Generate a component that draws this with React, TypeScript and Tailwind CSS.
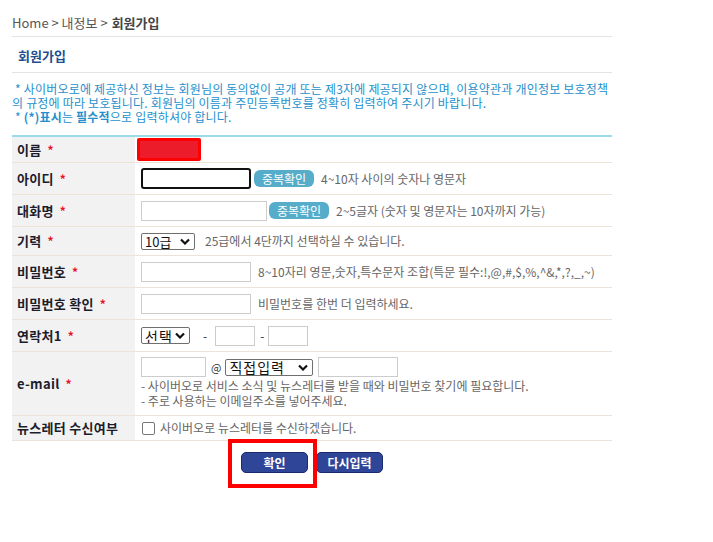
import React from "react";

const font = { fontFamily: '"Noto Sans CJK KR", "Noto Sans", sans-serif' };

function Chevron() {
  return (
    <svg width="10" height="7" viewBox="0 0 10 7" className="shrink-0">
      <path d="M1 1.5 L5 5.5 L9 1.5" fill="none" stroke="#111" strokeWidth="2.2" />
    </svg>
  );
}

function Sel({ label, w, big }: { label: string; w: string; big?: boolean }) {
  return (
    <div
      className={`${w} h-[17px] border border-[#6f6f6f] rounded-[2px] bg-white flex items-center justify-between pl-[3px] pr-[4px] whitespace-nowrap overflow-hidden ${
        big ? "text-[14px] tracking-[1px]" : "text-[13px]"
      } text-[#111] leading-none`}
    >
      <span>{label}</span>
      <Chevron />
    </div>
  );
}

function Label({ text }: { text: string }) {
  return (
    <div className="w-[123px] shrink-0 bg-[#f2f2f2] flex items-center pl-[5px] text-[13px] font-bold text-[#1c1c2c] tracking-[0.3px]">
      {text}
      <span className="text-[#e8102a] ml-[6px] text-[12px]">*</span>
    </div>
  );
}

function Row({ h, label, children, star = true }: { h: string; label: string; children?: React.ReactNode; star?: boolean }) {
  return (
    <div className={`flex ${h} border-b border-[#ebe2d8]`}>
      {star ? (
        <Label text={label} />
      ) : (
        <div className="w-[123px] shrink-0 bg-[#f2f2f2] flex items-center pl-[5px] text-[13px] font-bold text-[#1c1c2c] tracking-[0.3px]">{label}</div>
      )}
      <div className="flex-1 flex items-center pl-[6px] text-[12px] text-[#666] whitespace-nowrap">{children}</div>
    </div>
  );
}

function Input({ w }: { w: string }) {
  return <div className={`${w} h-[20px] border border-[#cccccc] bg-white shrink-0`} />;
}

function DupBtn() {
  return (
    <div className="w-[60px] h-[17px] rounded-[6px] bg-[#56adca] text-white text-[12px] flex items-center justify-center leading-none shrink-0">
      중복확인
    </div>
  );
}

export default function App() {
  return (
    <div className="w-[713px] h-[542px] bg-white" style={font}>
      <div className="ml-[12px] w-[600px]">
        <div className="h-[37px] border-b border-[#e3e3e3] flex items-center pt-[9px] text-[13px] text-[#555]">
          <span>Home &gt; 내정보 &gt; </span>
          <span className="font-bold text-[#444] ml-[4px]">회원가입</span>
        </div>
        <div className="h-[36px] border-b border-[#e3e3e3] flex items-center pl-[6px] pt-[3px] text-[13px] font-bold text-[#1f4f8f]">
          회원가입
        </div>
        <div className="pt-[9px] text-[12px] leading-[14px] text-[#2590cc] tracking-[0.2px]">
          <div className="pl-[3px] whitespace-nowrap">* 사이버오로에 제공하신 정보는 회원님의 동의없이 공개 또는 제3자에 제공되지 않으며, 이용약관과 개인정보 보호정책</div>
          <div className="whitespace-nowrap">의 규정에 따라 보호됩니다. 회원님의 이름과 주민등록번호를 정확히 입력하여 주시기 바랍니다.</div>
          <div className="pl-[3px]">
            * <span className="font-bold">(*)표시</span>는 <span className="font-bold">필수적</span>으로 입력하셔야 합니다.
          </div>
        </div>
        <div className="mt-[11px] border-t-2 border-[#9adce9]">
          <Row h="h-[26px]" label="이름">
            <div className="-ml-[4px] w-[64px] h-[23px] bg-[#ff0000] rounded-[2px] p-[3px]">
              <div className="w-full h-full bg-[#ec1c2a]" />
            </div>
          </Row>
          <Row h="h-[32px]" label="아이디">
            <div className="w-[110px] h-[21px] border-2 border-[#111] rounded-[3px] bg-white shrink-0" />
            <div className="ml-[3px]">
              <DupBtn />
            </div>
            <span className="ml-[7px]">4~10자 사이의 숫자나 영문자</span>
          </Row>
          <Row h="h-[32px]" label="대화명">
            <Input w="w-[126px]" />
            <div className="ml-[2px]">
              <DupBtn />
            </div>
            <span className="ml-[7px]">2~5글자 (숫자 및 영문자는 10자까지 가능)</span>
          </Row>
          <Row h="h-[29px]" label="기력">
            <Sel label="10급" w="w-[54px]" />
            <span className="ml-[10px]">25급에서 4단까지 선택하실 수 있습니다.</span>
          </Row>
          <Row h="h-[32px]" label="비밀번호">
            <Input w="w-[110px]" />
            <span className="ml-[7px]">8~10자리 영문,숫자,특수문자 조합(특문 필수:!,@,#,$,%,^&amp;,*,?,_,~)</span>
          </Row>
          <Row h="h-[32px]" label="비밀번호 확인">
            <Input w="w-[110px]" />
            <span className="ml-[7px]">비밀번호를 한번 더 입력하세요.</span>
          </Row>
          <Row h="h-[32px]" label="연락처1">
            <Sel label="선택" w="w-[49px]" big />
            <span className="ml-[13px] text-[#333]">-</span>
            <div className="ml-[8px]">
              <Input w="w-[40px]" />
            </div>
            <span className="ml-[5px] text-[#333]">-</span>
            <div className="ml-[4px]">
              <Input w="w-[40px]" />
            </div>
          </Row>
          <div className="flex h-[64px] border-b border-[#ebe2d8]">
            <Label text="e-mail" />
            <div className="flex-1 pl-[6px] pt-[5px] text-[12px] text-[#666] whitespace-nowrap">
              <div className="flex items-center">
                <Input w="w-[65px]" />
                <span className="ml-[5px] mr-[4px] text-[#333] text-[11px]">@</span>
                <Sel label="직접입력" w="w-[88px]" big />
                <div className="ml-[5px]">
                  <Input w="w-[80px]" />
                </div>
              </div>
              <div className="leading-[15px] mt-[1px]">- 사이버오로 서비스 소식 및 뉴스레터를 받을 때와 비밀번호 찾기에 필요합니다.</div>
              <div className="leading-[15px]">- 주로 사용하는 이메일주소를 넣어주세요.</div>
            </div>
          </div>
          <Row h="h-[25px]" label="뉴스레터 수신여부" star={false}>
            <div className="w-[13px] h-[13px] border border-[#777] rounded-[2px] bg-white ml-[1px]" />
            <span className="ml-[5px]">사이버오로 뉴스레터를 수신하겠습니다.</span>
          </Row>
        </div>
        <div className="flex justify-center gap-[8px] mt-[11px]">
          <div className="relative">
            <div className="w-[67px] h-[21px] rounded-[5px] bg-[#2f4598] border border-[#1b2a6c] text-white text-[12px] font-bold flex items-center justify-center leading-none">
              확인
            </div>
            <div className="absolute -left-[13px] -top-[13px] -right-[9px] -bottom-[15px] border-[4px] border-[#ff0000]" />
          </div>
          <div className="w-[67px] h-[21px] rounded-[5px] bg-[#2f4598] border border-[#1b2a6c] text-white text-[12px] font-bold flex items-center justify-center leading-none">
            다시입력
          </div>
        </div>
      </div>
    </div>
  );
}
